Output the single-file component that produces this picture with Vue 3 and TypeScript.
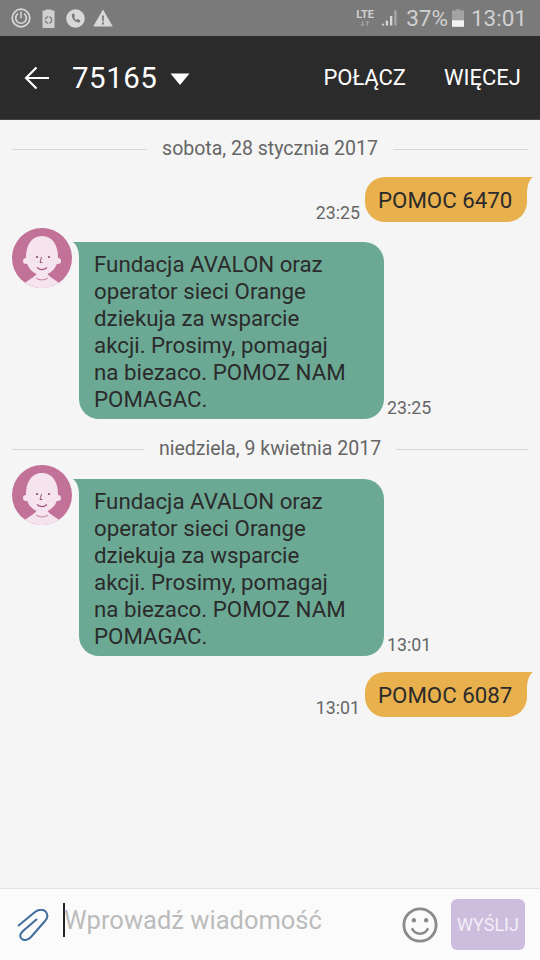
<template>
  <div class="phone">
    <div class="status">
      <div class="status-left">
        <svg width="20" height="20" viewBox="0 0 20 20"><circle cx="10" cy="10" r="8.800" fill="none" stroke="#d8d8d8" stroke-width="1.700" /><path d="M7 5.600a5.300 5.300 0 1 0 6 0" fill="none" stroke="#d8d8d8" stroke-width="1.700" /><path d="M10 3.600v6.600" stroke="#d8d8d8" stroke-width="1.500" /></svg>
        <svg width="13" height="19" viewBox="0 0 13 19"><path d="M3.500 1.500V.5h6v1H12a.5.5 0 0 1 .5.5v16.500a.5.5 0 0 1-.5.5H1a.5.5 0 0 1-.5-.5V2a.5.5 0 0 1 .5-.5z" fill="#d0d0d0" /><circle cx="6.500" cy="11" r="3.200" fill="none" stroke="#7a7a7a" stroke-width="1.200" stroke-dasharray="4 1.200" /></svg>
        <svg width="19" height="19" viewBox="0 0 20 20"><circle cx="10" cy="10" r="9.800" fill="#d8d8d8" /><path d="M6.200 5.400l2-.8 1.400 2.900-1.200 1c.5 1.400 1.500 2.500 2.900 3.200l1.100-1.200 2.800 1.600-.9 2c-4.700.2-8.900-4.200-8.100-8.700z" fill="#7a7a7a" /></svg>
        <svg class="warn" width="20" height="18" viewBox="0 0 20 18"><path d="M10 .5L19.800 17.500H.2z" fill="#d8d8d8" /><path d="M9 6.500h2l-.3 6h-1.400zM9 13.500h2v2H9z" fill="#7a7a7a" /></svg>
      </div>
      <div class="status-right">
        <div class="lte">
          <span>LTE</span>
          <svg width="10" height="5" viewBox="0 0 10 5"><path d="M2.500 5V0M.5 3l2 2 2-2M7.500 0v5M5.500 2l2-2 2 2" fill="none" stroke="#a5a5a5" stroke-width="1" /></svg>
        </div>
        <svg width="17" height="18" viewBox="0 0 18 18"><path d="M1 15h2v2H1z" fill="#d8d8d8" /><path d="M5 12h2.500v5H5zM9.500 7H12v10H9.500z" fill="#d8d8d8" /><path d="M14 1h2.500v16H14z" fill="#a8a8a8" /></svg>
        <span class="pct">37%</span>
        <svg class="batt" width="12" height="18" viewBox="0 0 13 19"><path d="M4 1.500V0h5v1.500h4V19H0V1.500z" fill="#a3a3a3" /><path d="M0 12h13v7H0z" fill="#f2f2f2" /></svg>
        <span class="clock">13:01</span>
      </div>
    </div>

    <header class="appbar">
      <svg class="back" width="25" height="24" viewBox="0 0 25 24"><path d="M25 12H2M12.500 1.500L2 12l10.500 10.500" fill="none" stroke="#fff" stroke-width="2.200" /></svg>
      <span class="number">75165</span>
      <svg class="caret" width="20" height="12" viewBox="0 0 20 12"><path d="M0.500 0.500h19L10 12z" fill="#fff" /></svg>
      <span class="action first">POŁĄCZ</span>
      <span class="action">WIĘCEJ</span>
    </header>

    <main class="thread">
      <template v-for="day in days" :key="day.label">
        <div class="day" :style="{ paddingTop: day.top + 'px' }">
          <span class="rule"></span>
          <span class="day-label">{{ day.label }}</span>
          <span class="rule"></span>
        </div>
        <template v-for="(m, i) in day.messages" :key="i">
          <div v-if="m.out" class="row-out" :style="{ marginTop: m.gap + 'px' }">
            <span class="time">{{ m.time }}</span>
            <div class="bubble-out">{{ m.text }}</div>
          </div>
          <div v-else class="row-in" :style="{ marginTop: m.gap + 'px' }">
            <svg class="avatar" width="60" height="60" viewBox="0 0 60 60">
              <circle cx="30" cy="30" r="30" fill="#c27298" />
              <path d="M13 54.800C18 51 23 49 25 45h10c2 4 7 6 12 9.800A30 30 0 0 1 13 54.800z" fill="#f5e3ed" />
              <path d="M30 8C41 8 46 18 46 29C46 40 38 47 30 47C22 47 14 40 14 29C14 18 19 8 30 8z" fill="#f5e3ed" />
              <circle cx="14" cy="33" r="3" fill="#f5e3ed" />
              <circle cx="46" cy="33" r="3" fill="#f5e3ed" />
              <circle cx="25" cy="29" r="1.100" fill="#8b4a6b" />
              <circle cx="37" cy="29" r="1.100" fill="#8b4a6b" />
              <path d="M29.500 29l-1.500 5.500h2.500" fill="none" stroke="#8b4a6b" stroke-width="0.900" />
              <path d="M25 39.500c3 2.500 7 2.500 10 0" fill="none" stroke="#a8527d" stroke-width="1.200" />
              <path d="M24 50c4 2.500 8 2.500 12 0" fill="none" stroke="#c27298" stroke-width="0.900" />
            </svg>
            <div class="bubble-in">{{ m.text }}</div>
            <span class="time in">{{ m.time }}</span>
          </div>
        </template>
      </template>
    </main>

    <footer class="composer">
      <svg class="clip" width="32" height="32" viewBox="0 0 32 32"><path d="M1 17L18 3C22 0 27 0 29 3C31 6 31 9 28 12L14 28C11 31 7 32 5 30C2 28 3 25 6 22L20 10" fill="none" stroke="#3f6d9f" stroke-width="2" /></svg>
      <div class="input"><span class="cursor"></span>Wprowadź wiadomość</div>
      <svg class="smile" width="36" height="36" viewBox="0 0 38 38"><circle cx="19" cy="19" r="17" fill="none" stroke="#8a8a8a" stroke-width="3" /><circle cx="12.500" cy="14" r="2.300" fill="#8a8a8a" /><circle cx="25.500" cy="14" r="2.300" fill="#8a8a8a" /><path d="M10.500 22.500c3 7.500 14 7.500 17 0" fill="none" stroke="#8a8a8a" stroke-width="2.600" /></svg>
      <button class="send">WYŚLIJ</button>
    </footer>
  </div>
</template>

<script setup lang="ts">
interface Message {
  out: boolean
  text: string
  time: string
  gap: number
}

interface Day {
  label: string
  top: number
  messages: Message[]
}

const avalon =
  'Fundacja AVALON oraz operator sieci Orange dziekuja za wsparcie akcji. Prosimy, pomagaj na biezaco. POMOZ NAM POMAGAC.'

const days: Day[] = [
  {
    label: 'sobota, 28 stycznia 2017',
    top: 17,
    messages: [
      { out: true, text: 'POMOC 6470', time: '23:25', gap: 16 },
      { out: false, text: avalon, time: '23:25', gap: 6 },
    ],
  },
  {
    label: 'niedziela, 9 kwietnia 2017',
    top: 18,
    messages: [
      { out: false, text: avalon, time: '13:01', gap: 4 },
      { out: true, text: 'POMOC 6087', time: '13:01', gap: 16 },
    ],
  },
]
</script>

<style scoped>
.phone {
  width: 540px;
  height: 960px;
  display: flex;
  flex-direction: column;
  background: #f5f5f5;
  font-family: Roboto, "Noto Sans", sans-serif;
  overflow: hidden;
}

.status {
  height: 36px;
  flex: none;
  display: flex;
  align-items: center;
  justify-content: space-between;
  padding: 0 13px 0 11px;
  background: #7a7a7a;
  color: #d0d0d0;
  box-sizing: border-box;
}

.status-left,
.status-right {
  display: flex;
  align-items: center;
}

.status-left {
  gap: 11px;
}

.warn {
  margin-left: -3px;
}

.lte {
  display: flex;
  flex-direction: column;
  align-items: center;
  gap: 2px;
  width: 20px;
  margin-right: 6px;
}

.lte span {
  font-size: 11px;
  line-height: 9px;
  font-weight: 700;
}

.pct,
.clock {
  font-size: 22.5px;
}

.pct {
  margin-left: 8px;
}

.batt {
  margin: 0 7px 0 4px;
}

.appbar {
  height: 84px;
  flex: none;
  display: flex;
  align-items: center;
  padding: 0 19px 0 24px;
  background: #2b2b2b;
  color: #fff;
  box-sizing: border-box;
  border-bottom: 1px solid #444;
}

.number {
  margin-left: 23px;
  font-size: 29.5px;
  letter-spacing: 0.5px;
}

.caret {
  margin: 2px 0 0 13px;
}

.action {
  font-size: 22px;
  margin-left: 38px;
}

.action.first {
  margin-left: auto;
}

.thread {
  flex: 1;
  display: flex;
  flex-direction: column;
  padding: 0 12px;
}

.day {
  display: flex;
  align-items: center;
  gap: 15px;
}

.rule {
  flex: 1;
  height: 1px;
  background: #d6d6d6;
}

.day-label {
  font-size: 19.5px;
  line-height: 24px;
  color: #666;
}

.row-out {
  display: flex;
  justify-content: flex-end;
  align-items: flex-end;
  padding-right: 1px;
}

.bubble-out {
  position: relative;
  width: 162px;
  height: 45px;
  margin-left: 5px;
  padding-left: 13px;
  display: flex;
  align-items: center;
  box-sizing: border-box;
  font-size: 22.3px;
  color: #2b2b2b;
  background: #e9b04e;
  border-radius: 20px 0 20px 20px;
}

.bubble-out::after {
  content: "";
  position: absolute;
  top: 0;
  left: 100%;
  width: 6px;
  height: 16px;
  background: #e9b04e;
  clip-path: path("M0 0H6C2 3 0 9 0 16Z");
}

.time {
  font-size: 17.8px;
  line-height: 20px;
  color: #666;
  margin-bottom: -1px;
}

.time.in {
  margin: 0 0 1px 3px;
  width: 44px;
}

.row-in {
  display: flex;
  align-items: flex-end;
}

.avatar {
  flex: none;
  align-self: flex-start;
}

.bubble-in {
  position: relative;
  width: 305px;
  margin: 14px 0 0 7px;
  padding: 9px 30px 6px 15px;
  box-sizing: border-box;
  font-size: 22.3px;
  line-height: 27px;
  color: #2b2b2b;
  background: #6ba995;
  border-radius: 0 20px 20px 20px;
}

.bubble-in::before {
  content: "";
  position: absolute;
  top: 0;
  right: 100%;
  width: 6px;
  height: 16px;
  background: #6ba995;
  clip-path: path("M6 0H0C4 3 6 9 6 16Z");
}

.composer {
  height: 72px;
  flex: none;
  display: flex;
  align-items: center;
  padding: 0 15px 0 17px;
  background: #fbfbfb;
  border-top: 1px solid #e2e2e2;
  box-sizing: border-box;
}

.clip {
  flex: none;
}

.input {
  flex: 1;
  display: flex;
  align-items: center;
  margin-left: 14px;
  padding-bottom: 10px;
  font-size: 25.5px;
  color: #bbb;
}

.cursor {
  width: 2px;
  height: 34px;
  background: #222;
  margin-right: -1px;
}

.smile {
  flex: none;
}

.send {
  width: 74px;
  height: 51px;
  margin-left: 13px;
  border: none;
  padding: 0;
  border-radius: 6px;
  background: #cdbedd;
  color: #f3eef7;
  font-family: inherit;
  font-size: 18px;
}
</style>

<style>
body {
  background: #f5f5f5;
}
</style>
